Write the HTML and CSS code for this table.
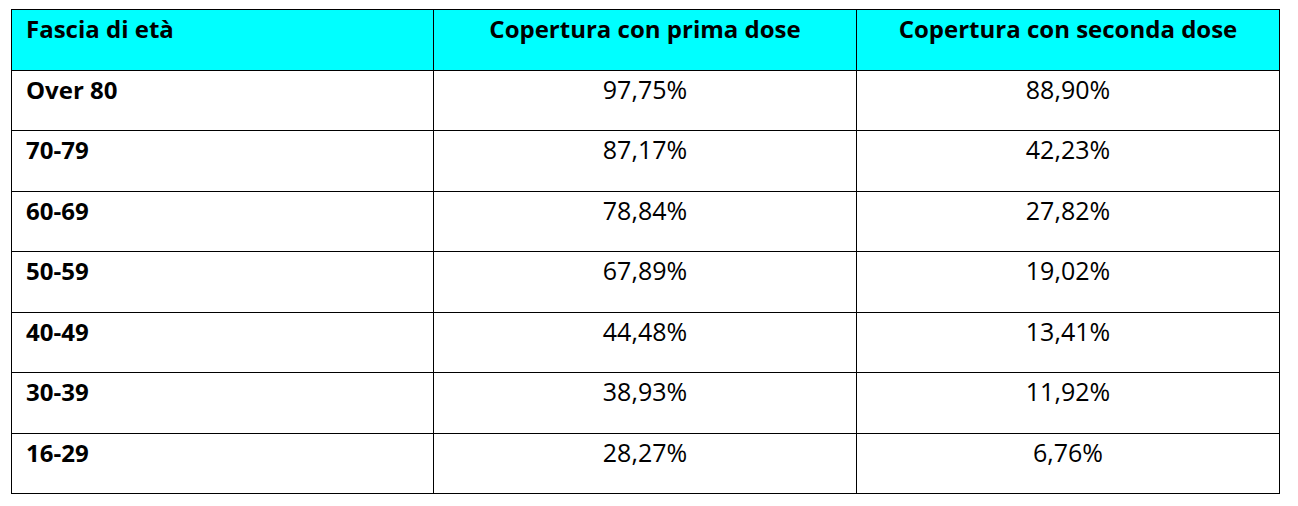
FILE: index.html
```html
<!DOCTYPE html>
<html lang="it">
<head>
<meta charset="utf-8">
<link rel="stylesheet" href="styles.css">
</head>
<body>
<table class="cov">
  <colgroup>
    <col class="c1"><col class="c2"><col class="c3">
  </colgroup>
  <thead>
    <tr>
      <th class="left">Fascia di età</th>
      <th>Copertura con prima dose</th>
      <th>Copertura con seconda dose</th>
    </tr>
  </thead>
  <tbody>
    <tr><td class="age">Over 80</td><td>97,75%</td><td>88,90%</td></tr>
    <tr><td class="age">70-79</td><td>87,17%</td><td>42,23%</td></tr>
    <tr><td class="age">60-69</td><td>78,84%</td><td>27,82%</td></tr>
    <tr><td class="age">50-59</td><td>67,89%</td><td>19,02%</td></tr>
    <tr><td class="age">40-49</td><td>44,48%</td><td>13,41%</td></tr>
    <tr><td class="age">30-39</td><td>38,93%</td><td>11,92%</td></tr>
    <tr><td class="age">16-29</td><td>28,27%</td><td>6,76%</td></tr>
  </tbody>
</table>
</body>
</html>
```
FILE: styles.css
```css
html, body {
  margin: 0;
  background: #fff;
}
body {
  padding: 9px 0 0 11px;
  font-family: "Open Sans", "Noto Sans", sans-serif;
  color: #000;
}
.cov {
  border-collapse: collapse;
  table-layout: fixed;
  width: 1268px;
}
.c1 { width: 422px; }
.c2 { width: 423px; }
.c3 { width: 423px; }
.cov th, .cov td {
  border: 1.5px solid #000;
  height: 60.5px;
  box-sizing: border-box;
  vertical-align: top;
  padding: 3px 14px 0 14px;
  text-align: center;
  font-size: 25px;
  line-height: 30px;
}
.cov th {
  background: #00ffff;
  font-weight: 700;
  font-size: 24px;
  padding-top: 4px;
}
.cov th.left, .cov td.age {
  text-align: left;
}
.cov td.age {
  font-weight: 700;
  font-size: 24px;
  padding-top: 4px;
}
.cov td {
  font-weight: 400;
}
```
